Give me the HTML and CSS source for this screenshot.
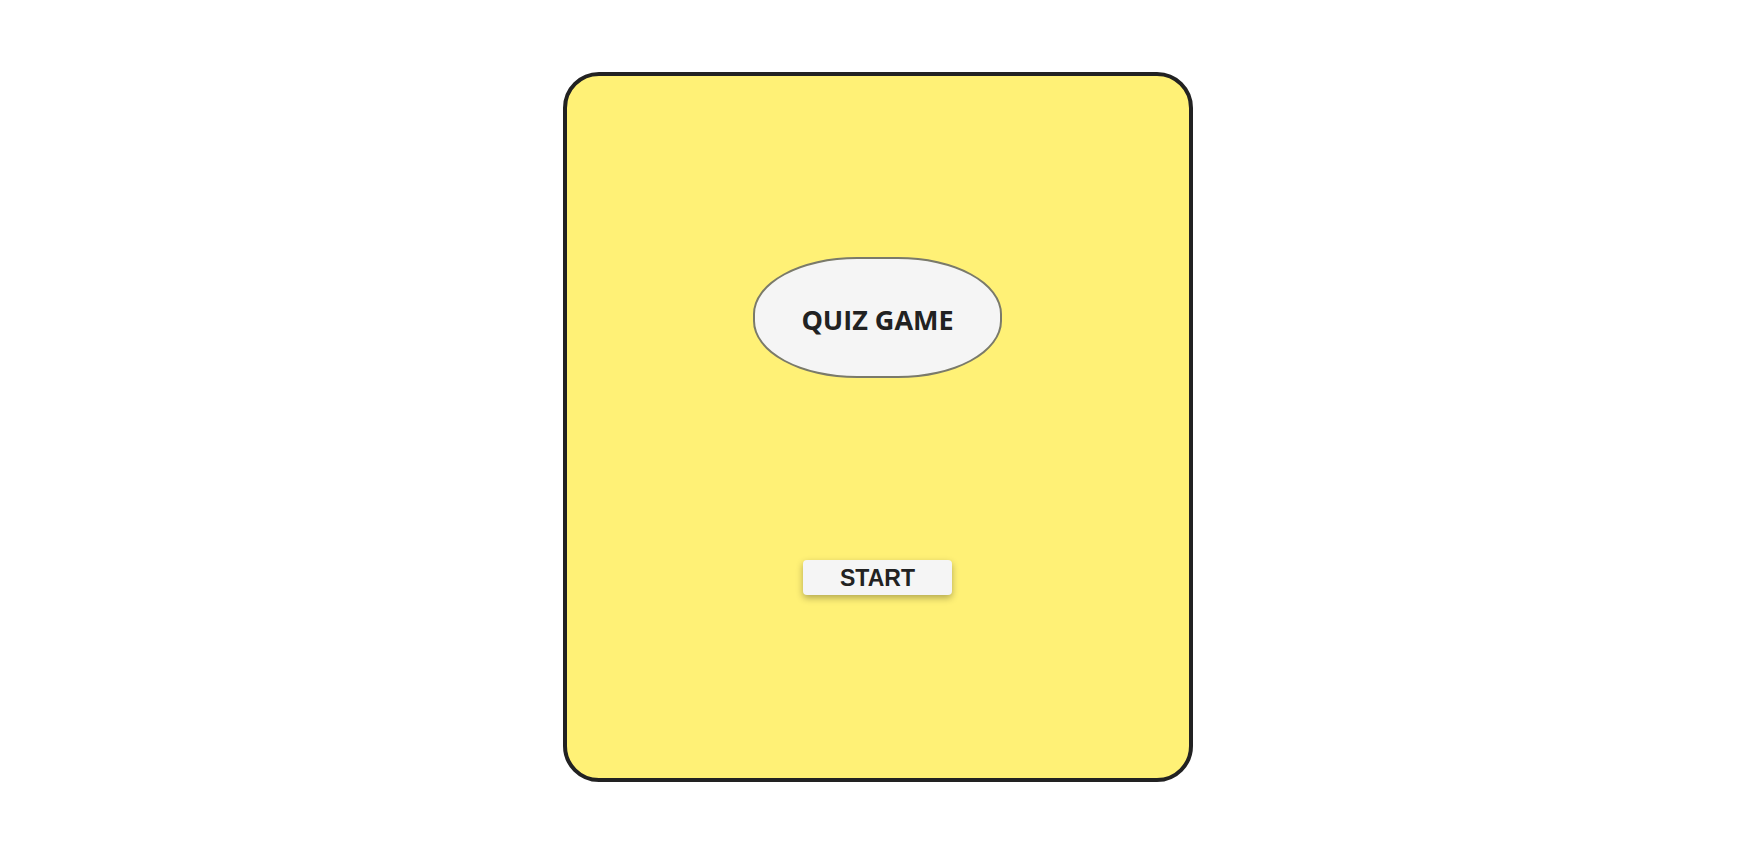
FILE: index.html
```html
<!DOCTYPE html>
<html>
<head>
<meta charset="utf-8">
<link rel="stylesheet" href="styles.css">
</head>
<body>
<div class="page">
  <div class="card">
    <div class="title">QUIZ GAME</div>
    <button class="start">START</button>
  </div>
</div>
</body>
</html>
```
FILE: styles.css
```css
html, body {
  margin: 0;
  padding: 0;
  background: #ffffff;
}
.page {
  display: flex;
  justify-content: center;
  padding-top: 72px;
}
.card {
  box-sizing: border-box;
  width: 630px;
  height: 710px;
  background: #fff176;
  border: 4px solid #222222;
  border-radius: 36px;
  display: flex;
  flex-direction: column;
  align-items: center;
  padding-top: 181px;
}
.title {
  box-sizing: border-box;
  width: 249px;
  height: 121px;
  background: #f5f5f5;
  border: 2px solid #7a7a6a;
  border-radius: 104px / 57px;
  display: flex;
  align-items: center;
  justify-content: center;
  font-family: "Open Sans", sans-serif;
  font-weight: 700;
  font-size: 27px;
  color: #222222;
  padding-top: 3px;
}
.start {
  margin-top: 182px;
  width: 149px;
  height: 35px;
  background: #f5f5f5;
  border: none;
  border-radius: 4px;
  box-shadow: 0 3px 7px rgba(0, 0, 0, 0.3);
  font-family: "Liberation Sans", Arial, sans-serif;
  font-weight: 700;
  font-size: 23px;
  color: #222222;
  padding: 1px 0 0 0;
}
```
